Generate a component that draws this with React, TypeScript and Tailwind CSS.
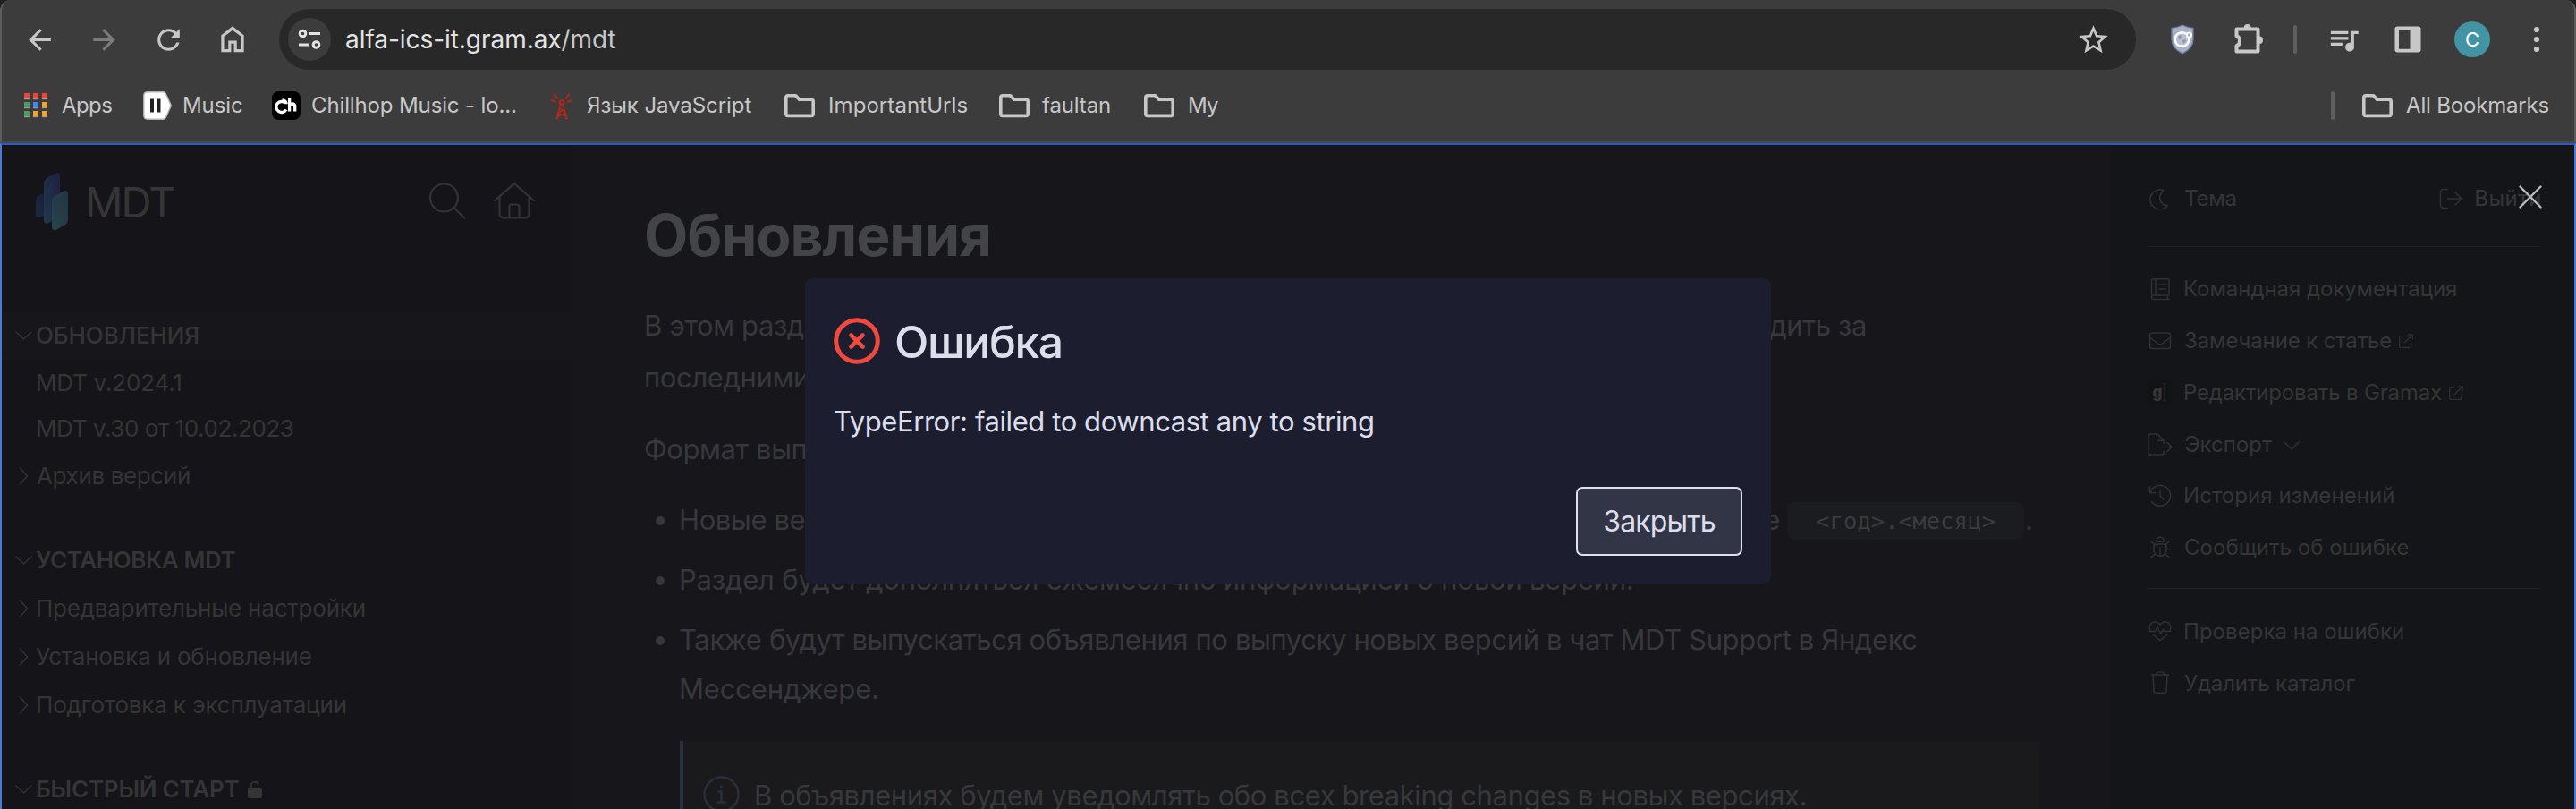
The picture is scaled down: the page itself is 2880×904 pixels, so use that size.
import React, { ReactNode } from "react";
import { MdArrowBack, MdArrowForward, MdRefresh, MdStarOutline, MdQueueMusic } from "react-icons/md";

function FolderIcon() {
  return (
    <svg width="34" height="28" viewBox="0 0 34 28" fill="none" stroke="#c7c7c7" strokeWidth="3.6" strokeLinejoin="round" className="shrink-0">
      <path d="M4 2.800h8.600l4 4.400H30q2.200 0 2.200 2.200V23q0 2.400-2.200 2.400H4Q1.800 25.400 1.800 23V5Q1.800 2.800 4 2.800Z" />
    </svg>
  );
}

function AppsIcon() {
  const colors = ["#e8453c", "#e8453c", "#e8453c", "#4f9d5a", "#4285f4", "#eda533", "#4f9d5a", "#eda533", "#eda533"];
  return (
    <svg width="27" height="28" viewBox="0 0 27 28" className="shrink-0">
      {colors.map((c, i) => (
        <g key={i}>
          <rect x={(i % 3) * 10} y={Math.floor(i / 3) * 10 + 6} width="6" height="1.200" fill="#9c9c9c" />
          <rect x={(i % 3) * 10} y={Math.floor(i / 3) * 10} width="6" height="6" fill={c} />
        </g>
      ))}
    </svg>
  );
}

function MusicIcon() {
  return (
    <svg width="32" height="32" viewBox="0 0 32 32" className="shrink-0">
      <path d="M5 .8h17.500q2 0 2.800 1.700L31.300 16l-6 13.500q-.8 1.700-2.800 1.700H5q-4.200 0-4.200-4.200V5Q.8.8 5 .8Z" fill="#fff" stroke="#b5b5b5" strokeWidth="1.400" />
      <path d="M8 8.500h4v15H8zM15.500 8.500h4v15h-4z" fill="#222" />
    </svg>
  );
}

function ChillhopIcon() {
  return (
    <svg width="32" height="32" viewBox="0 0 32 32" className="shrink-0">
      <rect width="32" height="32" rx="7.500" fill="#000" />
      <path d="M15 13.200A6 6 0 1 0 16 20.500M11.500 9.800q4.500.2 4.500 4.500M19.600 7.500V22.500M19.600 17q.4-3 3.200-3 2.900 0 2.900 3.200v5.300" fill="none" stroke="#fff" strokeWidth="3.300" />
    </svg>
  );
}

function TowerIcon() {
  return (
    <svg width="26" height="32" viewBox="0 0 26 32" fill="none" stroke="#b3261e" strokeWidth="1.600" className="shrink-0">
      <circle cx="13" cy="12.500" r="2.300" strokeWidth="2" />
      <path d="M11.700 15 7 31M14.300 15 19 31M10.500 19.500 16.500 22M15.500 19.500 9 24.500 18 28M17 24.500 8 28.500M6.500 30.500h3M16.500 30.500h3" />
      <path d="M8.500 8.500 4 2.500M17.500 8.500 22 2.500M6.500 11.800 1 9.500M19.500 11.800 25 9.500" strokeWidth="1.900" />
    </svg>
  );
}

function Bookmark({ icon, width, gap, children }: { icon: ReactNode; width: string; gap: string; children: ReactNode }) {
  return (
    <div className={`flex shrink-0 items-center ${width} ${gap}`}>
      {icon}
      {children}
    </div>
  );
}

function ToolButton({ children }: { children: ReactNode }) {
  return <div className="flex size-12 shrink-0 items-center justify-center">{children}</div>;
}

function BrowserChrome() {
  return (
    <header className="h-[160px] border-x-2 border-b-2 border-x-[#5c5c5c] border-b-[#474747] rounded-t-[12px] bg-[#3c3c3c] text-[#c7c7c7]">
      <div className="flex h-[88px] items-center pr-[18px] pl-[18px]">
        <div className="flex gap-6">
          <ToolButton><MdArrowBack size={37} /></ToolButton>
          <ToolButton><MdArrowForward size={37} className="text-[#7b7b7b]" /></ToolButton>
          <ToolButton><MdRefresh size={37} /></ToolButton>
          <ToolButton>
            <svg width="38" height="38" viewBox="0 0 24 24" fill="currentColor">
              <path d="M6 19h3v-6h6v6h3v-9l-6-4.500L6 10zm-2 2V9l8-6.300L20 9v12h-7v-6h-2v6z" />
            </svg>
          </ToolButton>
        </div>
        <div className="ml-7 flex h-[68px] w-[2076px] items-center rounded-full bg-[#282828] pr-6 pl-[10px]">
          <div className="flex size-12 items-center justify-center rounded-full bg-[#3c3c3c]">
            <svg width="26" height="24" viewBox="0 0 26 24" fill="none" stroke="#e3e3e3" strokeWidth="3">
              <circle cx="5.500" cy="5.500" r="3.300" />
              <path d="M13 5.500h12M1 18h12" />
              <circle cx="20.500" cy="18" r="3.300" />
            </svg>
          </div>
          <div className="ml-4 flex-1 text-[28px] tracking-[-0.05px] text-[#e3e3e3]">
            alfa-ics-it.gram.ax<span className="text-[#c7c7c7]">/mdt</span>
          </div>
          <ToolButton><MdStarOutline size={39} /></ToolButton>
        </div>
        <div className="ml-7 flex items-center">
          <ToolButton>
            <svg width="28" height="34" viewBox="0 0 28 34">
              <path d="M14 1q6 3.200 12 3.400V17c0 7-5 12.500-12 15.800C7 29.500 2 24 2 17V4.400Q8 4.200 14 1Z" fill="#a9b0c4" stroke="#6b7ba6" strokeWidth="1.400" />
              <circle cx="13.500" cy="17" r="7.800" fill="#b9bfd0" stroke="#fff" strokeWidth="2.500" />
              <path d="M9 14q2-3 4-1l-1 4q-2 1-3-3Zm5 4q4-2 4 1l-3 3Z" fill="#8d95ad" />
              <circle cx="21.500" cy="12" r="2.600" fill="#a9b0c4" stroke="#fff" strokeWidth="1.800" />
            </svg>
          </ToolButton>
          <div className="w-6" />
          <ToolButton>
            <svg width="36" height="36" viewBox="0 0 36 36" fill="none" stroke="currentColor" strokeWidth="4" strokeLinejoin="round" className="-mt-[3px] ml-[2px]">
              <path d="M5.500 7.500h24v25h-24v-6.300c4.700-1.500 4.700-9.500 0-11z" />
              <path d="M13.700 6a4 4 0 0 1 8 0ZM31 15.500a4 4.200 0 0 1 0 8.400Z" fill="currentColor" stroke="none" />
            </svg>
          </ToolButton>
          <div className="mx-7 h-8 w-1 rounded-full bg-[#5f5f5f]" />
          <ToolButton><MdQueueMusic size={39} /></ToolButton>
          <div className="w-6" />
          <ToolButton>
            <svg width="30" height="30" viewBox="0 0 30 30" fill="currentColor">
              <path fillRule="evenodd" d="M3.500.5h23a3 3 0 0 1 3 3v23a3 3 0 0 1-3 3h-23a3 3 0 0 1-3-3v-23a3 3 0 0 1 3-3ZM5 4.500v21.300h12.500V4.500Z" />
            </svg>
          </ToolButton>
          <div className="w-6" />
          <ToolButton>
            <div className="flex size-10 items-center justify-center rounded-full bg-[#4294a5] text-[22px] text-white">C</div>
          </ToolButton>
          <div className="w-6" />
          <ToolButton>
            <svg width="8" height="30" viewBox="0 0 8 30" fill="currentColor">
              <circle cx="4" cy="4" r="3.100" /><circle cx="4" cy="15" r="3.100" /><circle cx="4" cy="26" r="3.100" />
            </svg>
          </ToolButton>
        </div>
      </div>
      <div className="flex h-[60px] items-center pl-[25px] text-[24px] whitespace-nowrap">
        <Bookmark icon={<AppsIcon />} width="w-[133px]" gap="gap-[15px]"><span className="tracking-[-0.6px]">Apps</span></Bookmark>
        <Bookmark icon={<MusicIcon />} width="w-[144px]" gap="gap-3"><span className="tracking-[-0.09px]">Music</span></Bookmark>
        <Bookmark icon={<ChillhopIcon />} width="w-[311px]" gap="gap-3"><span className="tracking-[-0.13px]">Chillhop Music - lo...</span></Bookmark>
        <Bookmark icon={<TowerIcon />} width="w-[262px]" gap="gap-[15px]"><span className="tracking-[-0.07px]">Язык JavaScript</span></Bookmark>
        <Bookmark icon={<FolderIcon />} width="w-[240px]" gap="gap-[15px]"><span className="tracking-[0.08px]">ImportantUrls</span></Bookmark>
        <Bookmark icon={<FolderIcon />} width="w-[162px]" gap="gap-[14px]"><span className="tracking-[-0.13px]">faultan</span></Bookmark>
        <Bookmark icon={<FolderIcon />} width="w-[120px]" gap="gap-[15px]"><span className="tracking-[-0.8px]">My</span></Bookmark>
        <div className="ml-auto h-8 w-1 rounded-full bg-[#5f5f5f]" />
        <div className="ml-[31px] flex w-[237px] items-center gap-[15px]">
          <FolderIcon />
          <span className="tracking-[-0.18px]">All Bookmarks</span>
        </div>
      </div>
    </header>
  );
}

function NavRow({ open, chevron = true, className = "", children }: { open?: boolean; chevron?: boolean; className?: string; children: ReactNode }) {
  return (
    <div className={`flex h-[54px] shrink-0 items-center pl-[14px] text-[26px] whitespace-nowrap ${className}`}>
      <svg width="24" height="24" viewBox="0 0 24 24" fill="none" stroke="#333335" strokeWidth="1.500" strokeLinecap="round" className="shrink-0">
        {chevron && (open ? <path d="M2 8l8.500 8L19 8" /> : <path d="M6.500 3l8 9-8 9" />)}
      </svg>
      <span className="flex items-center pb-px">{children}</span>
    </div>
  );
}

function Sidebar() {
  return (
    <aside className="flex w-[638px] shrink-0 flex-col overflow-hidden bg-[#151418] text-[#353536]">
      <div className="flex h-[186px] shrink-0 items-start pt-[31px] pl-[38px]">
        <svg width="36" height="65" viewBox="0 0 36 65">
          <defs>
            <linearGradient id="a" x1="1" y1="0" x2="0" y2="1"><stop offset="0" stopColor="#1a1c39" /><stop offset="1" stopColor="#1b2b41" /></linearGradient>
            <linearGradient id="b" x1="1" y1="0" x2="0" y2="1"><stop offset="0" stopColor="#1c203f" /><stop offset="1" stopColor="#22394e" /></linearGradient>
            <linearGradient id="c" x1="1" y1="0" x2="0" y2="1"><stop offset="0" stopColor="#213444" /><stop offset="1" stopColor="#29444c" /></linearGradient>
          </defs>
          <path d="M0 32Q0 27 4 25L14 21V46L5 49.500Q0 51 0 46Z" fill="url(#a)" />
          <path d="M9 12Q9 7.500 13 5.500L21.500 1Q27 -1.500 27 4V45Q27 50 22.500 52L14 56.300Q9 58 9 52Z" fill="url(#b)" />
          <path d="M18 32Q18 27.500 22 25.500L30.500 20.800Q36 18.500 36 24V52Q36 56.500 32 58.800L23.500 63.500Q18 66 18 60Z" fill="url(#c)" />
        </svg>
        <span className="mt-[5px] ml-[19px] w-[384px] text-[47px] leading-[56px] tracking-[-1.95px]">MDT</span>
        <svg width="42" height="42" viewBox="0 0 42 42" fill="none" stroke="#333334" strokeWidth="2.200" strokeLinecap="round" className="mt-[10px]">
          <circle cx="17.500" cy="18" r="15.500" /><path d="M28.500 29 40 40.500" />
        </svg>
        <svg width="46" height="42" viewBox="0 0 46 42" fill="none" stroke="#333334" strokeWidth="2.200" strokeLinecap="round" strokeLinejoin="round" className="mt-[10px] ml-[31px]">
          <path d="M1.200 21 23 2.200 44.800 21M6.500 17V35.500Q6.500 40.500 11.500 40.500H34.500Q39.500 40.500 39.500 35.500V17M17.500 40V28Q17.500 25.500 20 25.500H26Q28.500 25.500 28.500 28V40" />
        </svg>
      </div>
      <NavRow open className="bg-[#17161b]"><span className="font-medium tracking-[-0.1px]">ОБНОВЛЕНИЯ</span></NavRow>
      <NavRow chevron={false} className="!h-[51px]"><span className="tracking-[-0.2px]">MDT v.2024.1</span></NavRow>
      <NavRow chevron={false} className="!h-[52px]"><span className="tracking-[-0.42px]">MDT v.30 от 10.02.2023</span></NavRow>
      <NavRow><span className="ml-px tracking-[-0.36px]">Архив версий</span></NavRow>
      <NavRow open className="mt-10"><span className="font-semibold tracking-[-0.42px]">УСТАНОВКА MDT</span></NavRow>
      <NavRow><span className="tracking-[-0.22px]">Предварительные настройки</span></NavRow>
      <NavRow><span className="tracking-[-0.19px]">Установка и обновление</span></NavRow>
      <NavRow><span className="tracking-[-0.17px]">Подготовка к эксплуатации</span></NavRow>
      <NavRow open className="mt-10">
        <span className="font-semibold tracking-[-0.22px]">БЫСТРЫЙ СТАРТ</span>
        <svg width="16" height="20" viewBox="0 0 16 20" className="ml-[10px]">
          <rect y="8.500" width="16" height="11.500" rx="2.200" fill="#353536" />
          <path d="M3.700 9V6a4.200 4.200 0 0 1 8.300-1" fill="none" stroke="#353536" strokeWidth="1.700" />
        </svg>
      </NavRow>
    </aside>
  );
}

function Bullet() {
  return <span className="mt-[24px] mr-[16px] ml-[13px] size-[10px] shrink-0 rounded-full bg-[#38383c]" />;
}

function Article() {
  return (
    <main className="w-[1720px] shrink-0 overflow-hidden bg-[#17161b] pt-[60px] pl-[80px] text-[31px] tracking-[-0.38px] whitespace-nowrap text-[#37383c]">
      <h1 className="text-[64px] leading-[82px] font-bold tracking-[-0.98px] text-[#434448]">Обновления</h1>
      <div className="mt-[31px] leading-[57.5px]">
        <p className="flex w-[1367px] justify-between">
          <span>В этом разделе</span>
          <span>следить за</span>
        </p>
        <p>последними</p>
        <p className="mt-[23px]">Формат выпуска:</p>
      </div>
      <ul className="mt-[22px] flex flex-col gap-3 leading-[55px]">
        <li className="flex">
          <Bullet />
          <span className="flex w-[1231px] justify-between"><span>Новые версии</span><span>виде</span></span>
          <code className="mt-[8px] ml-[8px] flex h-[42px] w-[265px] items-center justify-center rounded-lg bg-[#1b1c1f] pt-0.5 font-['DejaVu_Sans_Mono',monospace] text-[25.500px] tracking-[0.1px] text-[#3a3b3d]">&lt;год&gt;.&lt;месяц&gt;</code>
          <span className="ml-px">.</span>
        </li>
        <li className="flex"><Bullet /><span className="tracking-[-0.2px]">Раздел будет дополняться ежемесячно информацией о новой версии.</span></li>
        <li className="flex">
          <Bullet />
          <span>
            Также будут выпускаться объявления по выпуску новых версий в чат MDT Support в Яндекс
            <br />
            <span className="tracking-[-0.17px]">Мессенджере.</span>
          </span>
        </li>
      </ul>
      <div className="mt-[31px] ml-[40px] flex h-[140px] w-[1520px] border-l-4 border-[#2a303b] bg-[#1a1a1d] pt-[32px] pl-[22px] leading-[58px]">
        <svg width="41" height="41" viewBox="0 0 41 41" fill="none" stroke="#2a303b" strokeWidth="2.300" className="mt-[7px]">
          <circle cx="20.500" cy="20.500" r="19" />
          <path d="M16.500 17.500h4v12M16 29.700h9.500" />
          <circle cx="20.500" cy="12.500" r="1.800" fill="#2a303b" stroke="none" />
        </svg>
        <span className="ml-[16px] tracking-[-0.41px]">В объявлениях будем уведомлять обо всех breaking changes в новых версиях.</span>
      </div>
    </main>
  );
}

function ActionIcon({ children }: { children: ReactNode }) {
  return (
    <svg width="28" height="28" viewBox="0 0 28 28" fill="none" stroke="#303133" strokeWidth="1.500" strokeLinecap="round" strokeLinejoin="round" className="mr-[12px] ml-px shrink-0">
      {children}
    </svg>
  );
}

function ExternalIcon() {
  return (
    <svg width="16" height="16" viewBox="0 0 16 16" fill="none" stroke="#303133" strokeWidth="1.200" className="ml-[8px]">
      <path d="M6 2.500H2q-1.300 0-1.300 1.300V14q0 1.300 1.300 1.300H12.500q1.300 0 1.300-1.300V10M10 .8h5.200V6M15 1 6 10" />
    </svg>
  );
}

function Action({ icon, children }: { icon: ReactNode; children: ReactNode }) {
  return <div className="flex h-[57.75px] items-center">{icon}<span className="flex items-center pt-px">{children}</span></div>;
}

function Actions() {
  return (
    <aside className="flex-1 bg-[#141519] pt-[30px] pr-[38px] pl-10 text-[24px] whitespace-nowrap text-[#353536]">
      <div className="flex h-[58px] items-center pt-0.5">
        <ActionIcon><path d="M17.500 4.500A11 11 0 1 0 22.500 21.500C15 22 10 13 17.500 4.500Z" /></ActionIcon>
        <span className="ml-px flex-1 tracking-[-0.2px]">Тема</span>
        <svg width="26" height="24" viewBox="0 0 26 24" fill="none" stroke="#303133" strokeWidth="1.500" strokeLinecap="round" strokeLinejoin="round">
          <path d="M9 1.500H5Q1.500 1.500 1.500 5V19Q1.500 22.500 5 22.500H9M9.500 12H25M18 5l7 7-7 7" />
        </svg>
        <span className="-mr-0.5 ml-[13px] tracking-[0.5px]">Выйти</span>
      </div>
      <div className="mt-[25px] mb-[18px] h-px bg-[#212225]" />
      <Action icon={<ActionIcon><path d="M7 2.700H22q2 0 2 2V19.500q0 1.500-1.500 1.500H7q-2.500 0-2.500 2.200T7 25.400H24M4.500 23V5.200q0-2.500 2.500-2.500M9 3V21M12.500 9H20.500M12.500 14H20.500M22.500 21v4.400" /></ActionIcon>}>
        <span className="tracking-[-0.06px]">Командная документация</span>
      </Action>
      <Action icon={<ActionIcon><rect x="2.500" y="5" width="23" height="17.500" rx="2.800" /><path d="M2.500 10 11.500 17q2.500 1.800 5 0L25.500 10" /></ActionIcon>}>
        <span className="ml-px tracking-[-0.13px]">Замечание к статье</span><ExternalIcon />
      </Action>
      <Action
        icon={
          <span className="mr-[12px] ml-px flex size-7 items-center justify-center rounded-[5px] bg-[#121315]">
            <span className="text-[17px] leading-none font-extrabold text-[#38383a]">g</span>
            <svg width="6" height="20" viewBox="0 0 6 20" fill="none" stroke="#2a2a2c" strokeWidth="1.100"><path d="M1 .8h4M3 .8v18.400M1 19.200h4" /></svg>
          </span>
        }
      >
        <span className="tracking-[-0.17px]">Редактировать в Gramax</span><ExternalIcon />
      </Action>
      <Action icon={<ActionIcon><path d="M18 13.500V10L11 3H3.500Q.9 3 .9 5.600V23.400Q.9 26 3.500 26H15.500Q18 26 18 23.500V22M10.500 3V8q0 2.500 2.500 2.500H18M10 17.500H27M22 12.500l5 5-5 5" /></ActionIcon>}>
        <span className="ml-px">Экспорт</span>
        <svg width="18" height="10" viewBox="0 0 18 10" fill="none" stroke="#303133" strokeWidth="1.400" strokeLinecap="round" className="mt-[3px] ml-[13px]"><path d="M1 1l8 8 8-8" /></svg>
      </Action>
      <Action icon={<ActionIcon><path d="M2.500 4V10.500H8.800M3.200 10A11.500 11.500 0 1 1 4.700 20.500M14 8V14l3.600 4" /></ActionIcon>}>
        <span className="tracking-[0.08px]">История изменений</span>
      </Action>
      <Action icon={<ActionIcon><path d="M9.700 7.200V6.500a4.300 4.300 0 0 1 8.600 0v.7ZM9.500 10H18.500Q21 10 21 12.500V16.500a7 7 0 0 1-14 0V12.500Q7 10 9.500 10ZM14 14V23.500M2.200 15.500H7M21 15.500h4.800M4 7l3.800 3.800M24 7l-3.800 3.800M4 25l4.500-4.500M24 25l-4.500-4.500" /></ActionIcon>}>
        <span className="ml-px tracking-[0.03px]">Сообщить об ошибке</span>
      </Action>
      <div className="mt-[16px] mb-[19px] h-px bg-[#212225]" />
      <Action icon={<ActionIcon><path d="M2.900 13A6.200 6.200 0 0 1 12.500 5.500L14 7l1.500-1.500A6.200 6.200 0 0 1 25.100 13M2.500 14.500H8.500L11 9.500l3.500 8 3-5 1.500 2h6.500M6 18l6.500 5.500q1.500 1.300 3 0L22 18" /></ActionIcon>}>
        <span className="tracking-[0.04px]">Проверка на ошибки</span>
      </Action>
      <Action icon={<ActionIcon><path d="M4.500 5H23.500M9 5 10.500 2.600q.4-.6 1-.6H16.500q.6 0 1 .6L19 5M6 5.500 7 23q.2 2.300 2.500 2.300H18.500Q20.800 25.300 21 23L22 5.500" /></ActionIcon>}>
        <span className="ml-px tracking-[-0.16px]">Удалить каталог</span>
      </Action>
    </aside>
  );
}

function ErrorDialog() {
  return (
    <div className="absolute inset-0 flex items-start justify-center pt-[311px]">
      <div className="flex h-[342px] w-[1080px] flex-col rounded-[9px] bg-[#1c1e30] px-8 pt-[34px] text-[#dddeeb]">
        <div className="flex h-[72px] items-center">
          <svg width="52" height="52" viewBox="0 0 52 52" fill="none" stroke="#f04a3e" strokeWidth="5" strokeLinecap="round">
            <circle cx="26" cy="26" r="23.300" />
            <path d="M19.500 19.500l13 13M32.500 19.500l-13 13" strokeWidth="4.600" />
          </svg>
          <h2 className="ml-4 pt-0.5 text-[50px] leading-[72px] font-[450] tracking-[-1.4px]">Ошибка</h2>
        </div>
        <p className="mt-[30px] text-[31px] leading-[48px] tracking-[-0.41px]">TypeError: failed to downcast any to string</p>
        <button className="mt-[49px] h-[77px] w-[186px] self-end rounded-[7px] border-2 border-[#dfe0ee] bg-[#323546] text-[32px] tracking-[-0.89px]">Закрыть</button>
      </div>
    </div>
  );
}

export default function App() {
  return (
    <div className="relative h-[904px] w-[2880px] overflow-hidden bg-[#1d211f] font-['Inter',sans-serif]">
      <BrowserChrome />
      <div className="flex h-[744px] overflow-hidden border-x-2 border-t-2 border-x-[#4c7bd3] border-t-[#275cc0] bg-[#17161b]">
        <Sidebar />
        <Article />
        <Actions />
      </div>
      <ErrorDialog />
      <svg width="26" height="26" viewBox="0 0 26 26" fill="none" stroke="#bcbcbd" strokeWidth="2.400" strokeLinecap="round" className="absolute top-[207px] left-[2816px]">
        <path d="M1.500 1.500l23 23M24.500 1.500l-23 23" />
      </svg>
    </div>
  );
}
